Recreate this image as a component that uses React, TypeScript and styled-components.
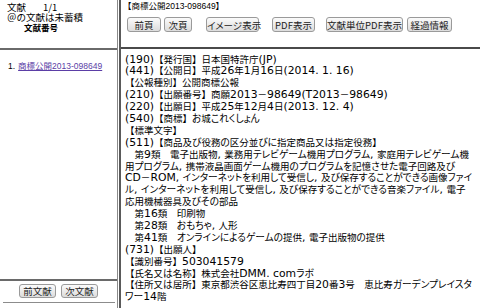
import React from "react";
import styled, { createGlobalStyle } from "styled-components";

const GlobalStyle = createGlobalStyle`
  html, body {
    margin: 0;
    padding: 0;
    background: #ffffff;
  }
  body {
    font-family: "Noto Sans CJK JP", "Liberation Sans", sans-serif;
    color: #000000;
    overflow: hidden;
  }
`;

const Frameset = styled.div`
  display: flex;
  width: 480px;
  height: 308px;
  overflow: hidden;
`;

const LeftColumn = styled.div`
  width: 117px;
  flex-shrink: 0;
  display: flex;
  flex-direction: column;
  border-right: 1px solid #8a8a8a;
`;

const LeftHeader = styled.div`
  height: 50px;
  flex-shrink: 0;
  padding: 2px 0 0 7px;
  box-sizing: border-box;
  border-bottom: 2px solid #6a6a6a;
  font-size: 9.5px;
  line-height: 10px;
`;

const HeaderLine = styled.div<{ $bold?: boolean; $indent?: number }>`
  white-space: nowrap;
  font-weight: ${(p) => (p.$bold ? 700 : 400)};
  font-size: ${(p) => (p.$bold ? 8.5 : 9.5)}px;
  padding-left: ${(p) => p.$indent ?? 0}px;
`;

const Gap = styled.span`
  display: inline-block;
  width: 17px;
`;

const DocList = styled.ol`
  flex: 1;
  min-height: 0;
  margin: 0;
  padding: 10px 0 0 8px;
  list-style: none;
  font-family: "Liberation Sans", "Noto Sans CJK JP", sans-serif;
  font-size: 8.5px;
  line-height: 12px;
`;

const DocItem = styled.li`
  white-space: nowrap;
`;

const DocLink = styled.a`
  color: #5b3ea6;
  text-decoration: underline;
  margin-left: 3px;
`;

const LeftFooter = styled.div`
  flex-shrink: 0;
  border-top: 2px solid #6a6a6a;
  height: 29px;
  box-sizing: border-box;
  display: flex;
  flex-direction: column;
  align-items: center;
  padding-top: 3px;
`;

const FooterButtons = styled.div`
  display: flex;
  gap: 5px;
`;

const Rule = styled.div`
  width: 112px;
  height: 1px;
  background: #8c8c8c;
  margin-top: 4px;
`;

const RightColumn = styled.div`
  flex: 1;
  min-width: 0;
  display: flex;
  flex-direction: column;
  border-left: 2px solid #5a5a5a;
  margin-left: 1px;
`;

const TopBar = styled.div`
  height: 49px;
  flex-shrink: 0;
  box-sizing: border-box;
  border-bottom: 2px solid #4a4a4a;
  padding: 1px 0 0 2px;
`;

const Title = styled.div`
  font-family: "Liberation Sans", "Noto Sans CJK JP", sans-serif;
  font-size: 8.5px;
  line-height: 11px;
  white-space: nowrap;
`;

const ButtonRow = styled.div`
  display: flex;
  margin-top: 5px;
  padding-left: 4px;
`;

const Button = styled.button<{ $w: number; $h?: number; $gap?: number }>`
  width: ${(p) => p.$w}px;
  height: ${(p) => p.$h ?? 15}px;
  margin-left: ${(p) => p.$gap ?? 0}px;
  padding: 0;
  font-family: "Noto Sans CJK JP", sans-serif;
  font-size: 9.5px;
  line-height: 12px;
  color: #222;
  background: linear-gradient(#fbfbfb, #dcdcdc);
  border: 1px solid #9a9a9a;
  border-radius: 3px;
  white-space: nowrap;
  font-feature-settings: "palt";
  flex-shrink: 0;
`;

const Body = styled.div`
  flex: 1;
  min-height: 0;
  overflow: hidden;
  padding: 4.5px 0 0 4px;
  font-family: "DejaVu Sans", "Noto Sans CJK JP", sans-serif;
  font-size: 9.5px;
  line-height: 11.9px;
`;

const Line = styled.div`
  height: 11.9px;
  white-space: nowrap;
`;

const Kana = styled.span`
  font-size: 9.7px;
  font-feature-settings: "palt";
`;

const Ascii = styled.span`
  font-size: 10.8px;
`;

const RUNS = /([\u3041-\u309f\u30a0-\u30ff]+|[\x20-\x7e]+)/;

const renderRuns = (text: string) =>
  text.split(RUNS).map((part, i) => {
    if (i % 2 === 0) return part;
    return /^[\x20-\x7e]/.test(part) ? (
      <Ascii key={i}>{part}</Ascii>
    ) : (
      <Kana key={i}>{part}</Kana>
    );
  });

const lines = [
  "(190)【発行国】日本国特許庁(JP)",
  "(441)【公開日】平成26年1月16日(2014. 1. 16)",
  "【公報種別】公開商標公報",
  "(210)【出願番号】商願2013－98649(T2013－98649)",
  "(220)【出願日】平成25年12月4日(2013. 12. 4)",
  "(540)【商標】お城これくしょん",
  "【標準文字】",
  "(511)【商品及び役務の区分並びに指定商品又は指定役務】",
  "　第9類　電子出版物, 業務用テレビゲーム機用プログラム, 家庭用テレビゲーム機",
  "用プログラム, 携帯液晶画面ゲーム機用のプログラムを記憶させた電子回路及び",
  "CD－ROM, インターネットを利用して受信し, 及び保存することができる画像ファイ",
  "ル, インターネットを利用して受信し, 及び保存することができる音楽ファイル, 電子",
  "応用機械器具及びその部品",
  "　第16類　印刷物",
  "　第28類　おもちゃ, 人形",
  "　第41類　オンラインによるゲームの提供, 電子出版物の提供",
  "(731)【出願人】",
  "【識別番号】503041579",
  "【氏名又は名称】株式会社DMM. comラボ",
  "【住所又は居所】東京都渋谷区恵比寿四丁目20番3号　恵比寿ガーデンプレイスタ",
  "ワー14階",
];

const App = () => {
  return (
    <>
      <GlobalStyle />
      <Frameset>
        <LeftColumn>
          <LeftHeader>
            <HeaderLine>
              文献<Gap />1/1
            </HeaderLine>
            <HeaderLine>＠の文献は未蓄積</HeaderLine>
            <HeaderLine $bold $indent={17}>
              文献番号
            </HeaderLine>
          </LeftHeader>
          <DocList>
            <DocItem>
              1.<DocLink href="#">商標公開2013-098649</DocLink>
            </DocItem>
          </DocList>
          <LeftFooter>
            <FooterButtons>
              <Button $w={37} $h={14}>前文献</Button>
              <Button $w={37} $h={14}>次文献</Button>
            </FooterButtons>
            <Rule />
          </LeftFooter>
        </LeftColumn>
        <RightColumn>
          <TopBar>
            <Title>【商標公開2013-098649】</Title>
            <ButtonRow>
              <Button $w={34}>前頁</Button>
              <Button $w={28} $gap={3}>次頁</Button>
              <Button $w={53} $gap={14}>イメージ表示</Button>
              <Button $w={43} $gap={13}>PDF表示</Button>
              <Button $w={77} $gap={11}>文献単位PDF表示</Button>
              <Button $w={45} $gap={4}>経過情報</Button>
            </ButtonRow>
          </TopBar>
          <Body>
            {lines.map((text, i) => (
              <Line key={i}>{renderRuns(text)}</Line>
            ))}
          </Body>
        </RightColumn>
      </Frameset>
    </>
  );
};

export default App;
